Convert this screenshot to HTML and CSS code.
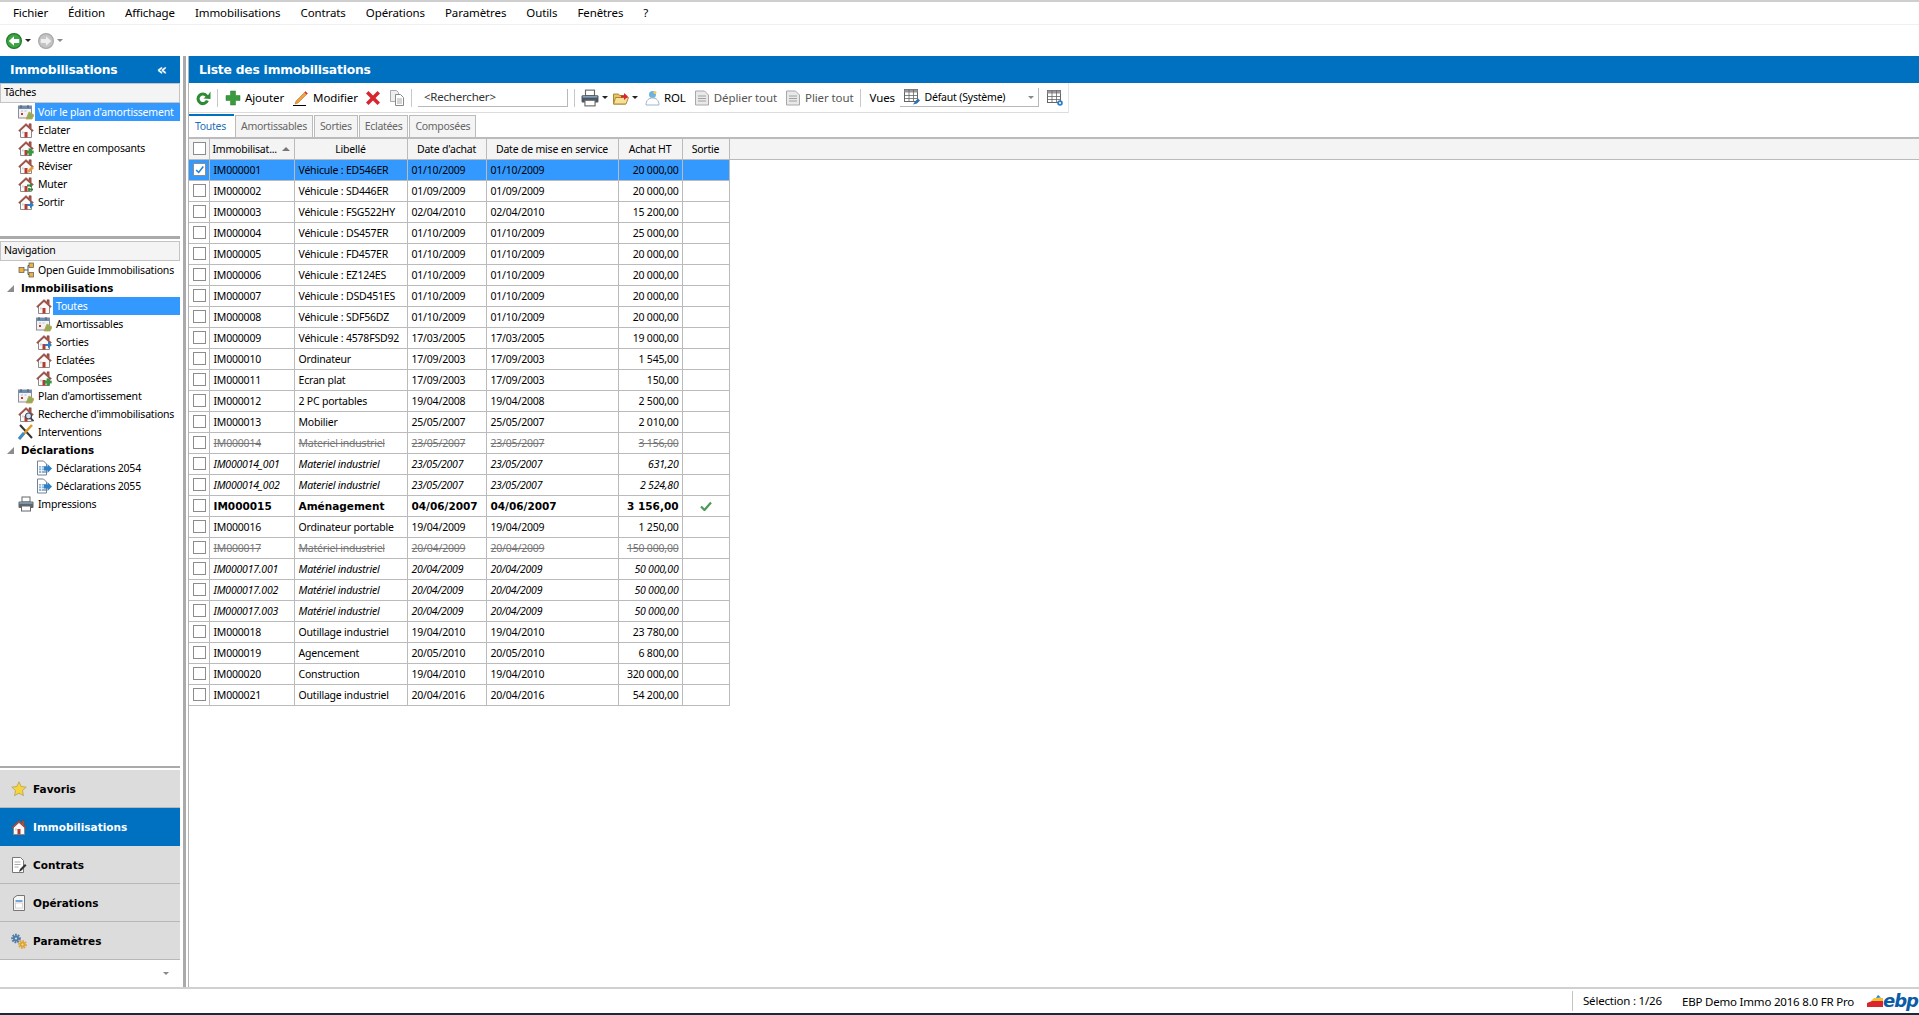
FILE: index.html
```html
<!DOCTYPE html>
<html>
<head>
  <title>EBP Immobilisations</title>
  <link rel="stylesheet" href="styles.css">
</head>
<body>

<!-- icon sheet -->
<svg class="sheet" xmlns="http://www.w3.org/2000/svg">
  <symbol id="house" viewBox="0 0 16 16">
    <path d="M2.500 8 8 3l5.500 5v7.500h-11z" fill="#fbf9f7" stroke="#8f8a86"/>
    <path d="M.6 8.600 8 1.500l3 2.800V1.800h2.200v4.600l2.200 2.200-.9.900L8 3.600 1.500 9.500z" fill="#a9564c" stroke="#7a3a32" stroke-width=".5"/>
    <rect x="6.500" y="10" width="3" height="5.500" fill="#b53a34"/>
    <rect x="4" y="9.500" width="1.800" height="2" fill="#c9d6e2"/>
  </symbol>
  <symbol id="cal" viewBox="0 0 16 16">
    <rect x=".5" y="2" width="13" height="12" fill="#f2f2f2" stroke="#8a8f99"/>
    <rect x=".5" y="2" width="13" height="3" fill="#6b8db5"/>
    <path d="M3 1v3M10 1v3" stroke="#555"/>
    <path d="M3 7h2M6.500 7h2M3 10h2" stroke="#b9bcc2"/>
    <rect x="3" y="9" width="2" height="2" fill="#c33"/>
    <path d="m8 15 3-7 5 3-2 4z" fill="#8cae5b" stroke="#c9a046" stroke-width=".8"/>
  </symbol>
  <symbol id="plus" viewBox="0 0 16 16">
    <path d="M5.500 1h5v4.500H15v5h-4.500V15h-5v-4.500H1v-5h4.500z" fill="#3a9a3f" stroke="#2a7a30" stroke-width=".5"/>
  </symbol>
  <symbol id="docarrow" viewBox="0 0 16 16">
    <path d="M1.500 1h6l3 3v11h-9z" fill="#fff" stroke="#77808c"/>
    <path d="M3 6h7v7H3z" fill="#8fb4d9"/>
    <path d="M3 8h7M3 10.500h7M5.500 6v7" stroke="#fff" stroke-width=".7"/>
    <path d="M8 6.500h3.500V4l4.500 4.500-4.500 4.500v-2.500H8z" fill="#2f7fc4"/>
  </symbol>
  <symbol id="pagelines" viewBox="0 0 16 16">
    <path d="M1.500 1h9l4 4v10h-13z" fill="#e9e9e9" stroke="#a8a8a8"/>
    <path d="M4 6h8M4 8.500h8M4 11h8" stroke="#a0a0a0"/>
  </symbol>
  <symbol id="grid" viewBox="0 0 16 16">
    <rect x=".5" y=".5" width="13" height="12" fill="#fff" stroke="#666"/>
    <path d="M.5 3.500h13v-3H.5z" fill="#999"/>
    <path d="M.5 6.500h13M.5 9.500h13M5 .5v12M9.500 .5v12" stroke="#666" stroke-width=".8"/>
  </symbol>
</svg>

<nav class="menubar">
  <span>Fichier</span><span>Édition</span><span>Affichage</span><span>Immobilisations</span><span>Contrats</span><span>Opérations</span><span>Paramètres</span><span>Outils</span><span>Fenêtres</span><span>?</span>
</nav>

<div class="navbar">
  <svg class="ic-nav" viewBox="0 0 16 16"><circle cx="8" cy="8" r="7.400" fill="#3ea544" stroke="#1f7a2a" stroke-width="1.200"/><path d="M2.800 8 8 3.200V6h5.200v4H8v2.800z" fill="#fff"/></svg>
  <i class="caret"></i>
  <svg class="ic-nav next" viewBox="0 0 16 16"><circle cx="8" cy="8" r="7.400" fill="#c4c4c4" stroke="#a8a8a8" stroke-width="1.200"/><path d="M13.200 8 8 3.200V6H2.800v4H8v2.800z" fill="#efefef"/></svg>
  <i class="caret gray"></i>
</div>

<div class="workspace">
  <aside class="sidebar">
    <div class="bar-blue">
      <span>Immobilisations</span>
      <span class="collapse">«</span>
    </div>

    <div class="group-title">Tâches</div>
    <ul class="tree tasks">
      <li class="selected"><svg class="ic"><use href="#cal"/></svg><span>Voir le plan d'amortissement</span></li>
      <li><svg class="ic"><use href="#house"/></svg><span>Eclater</span></li>
      <li><svg class="ic"><use href="#house"/><use href="#plus" x="8" y="8" width="8" height="8"/></svg><span>Mettre en composants</span></li>
      <li><svg class="ic" viewBox="0 0 16 16"><use href="#house"/><path d="m9 15 1-3 4-4 2 2-4 4z" fill="#e8963c"/></svg><span>Réviser</span></li>
      <li><svg class="ic" viewBox="0 0 16 16"><use href="#house"/><path d="M9 9.500h4M13 8v3M15 13.500h-4M11 12v3" stroke="#2e8b3c" stroke-width="1.800"/></svg><span>Muter</span></li>
      <li><svg class="ic" viewBox="0 0 16 16"><use href="#house"/><path d="M9 10h3V7.500l4 3.500-4 3.500V12H9z" fill="#2f7fc4"/></svg><span>Sortir</span></li>
    </ul>

    <div class="pane-rule"></div>

    <div class="group-title">Navigation</div>
    <ul class="tree">
      <li><svg class="ic" viewBox="0 0 16 16"><path d="M6 8h4M10 3.500v9M10 3.500h2M10 12.500h2" stroke="#555" fill="none"/><rect x="1" y="5.500" width="5" height="5" fill="#f0b23c" stroke="#555" stroke-width=".7"/><rect x="11" y="1" width="4.500" height="4.500" fill="#f0b23c" stroke="#555" stroke-width=".7"/><rect x="11" y="10.500" width="4.500" height="4.500" fill="#f0b23c" stroke="#555" stroke-width=".7"/></svg><span>Open Guide Immobilisations</span></li>
      <li class="branch"><i class="tri"></i><b>Immobilisations</b></li>
      <li class="sub selected"><svg class="ic"><use href="#house"/></svg><span>Toutes</span></li>
      <li class="sub"><svg class="ic"><use href="#cal"/></svg><span>Amortissables</span></li>
      <li class="sub"><svg class="ic" viewBox="0 0 16 16"><use href="#house"/><path d="M9 10h3V7.500l4 3.500-4 3.500V12H9z" fill="#2f7fc4"/></svg><span>Sorties</span></li>
      <li class="sub"><svg class="ic"><use href="#house"/></svg><span>Eclatées</span></li>
      <li class="sub"><svg class="ic"><use href="#house"/><use href="#plus" x="8" y="8" width="8" height="8"/></svg><span>Composées</span></li>
      <li><svg class="ic"><use href="#cal"/></svg><span>Plan d'amortissement</span></li>
      <li><svg class="ic" viewBox="0 0 16 16"><use href="#house"/><circle cx="10.500" cy="10" r="3" fill="#cfe2f3" stroke="#445" stroke-width="1.200"/><path d="m12.800 12.300 2.700 2.700" stroke="#445" stroke-width="1.800"/></svg><span>Recherche d'immobilisations</span></li>
      <li><svg class="ic" viewBox="0 0 16 16"><path d="m2 1 12 13" stroke="#333" stroke-width="2"/><path d="M14 1 2 14" stroke="#d99a2b" stroke-width="2.500"/><path d="m1 15 5-6" stroke="#3d8ac7" stroke-width="3"/></svg><span>Interventions</span></li>
      <li class="branch"><i class="tri"></i><b>Déclarations</b></li>
      <li class="sub"><svg class="ic"><use href="#docarrow"/></svg><span>Déclarations 2054</span></li>
      <li class="sub"><svg class="ic"><use href="#docarrow"/></svg><span>Déclarations 2055</span></li>
      <li><svg class="ic" viewBox="0 0 16 16"><rect x="4" y="1" width="8" height="5" fill="#fff" stroke="#666"/><rect x=".5" y="5.500" width="15" height="6.500" rx="1" fill="#5d6670"/><rect x="3.500" y="10" width="9" height="5" fill="#fff" stroke="#666"/><path d="M1.500 7h13" stroke="#9fc3e0"/></svg><span>Impressions</span></li>
    </ul>

    <div class="spacer"></div>

    <div class="pane-rule low"></div>
    <div class="sections">
      <div class="section"><svg class="ic-sec" viewBox="0 0 16 16"><path d="m8 .8 2.200 4.700 5 .6-3.700 3.500 1 5.100L8 12.200l-4.500 2.500 1-5.100L.8 6.100l5-.6z" fill="#f7d43c" stroke="#a89a5a" stroke-width=".7"/></svg>Favoris</div>
      <div class="section active"><svg class="ic-sec"><use href="#house"/></svg>Immobilisations</div>
      <div class="section"><svg class="ic-sec" viewBox="0 0 16 16"><path d="M1.500 .5h8l3 3v12h-11z" fill="#fff" stroke="#777"/><path d="M3.500 5h6M3.500 7.500h6M3.500 10h4" stroke="#aaa"/><path d="m8 15 1-3 5-5 1.500 1.500-5 5z" fill="#333"/></svg>Contrats</div>
      <div class="section"><svg class="ic-sec" viewBox="0 0 16 16"><path d="M2.500 3 6 .5h7.500v15h-11z" fill="#f6f6f6" stroke="#777"/><rect x="4.500" y="5" width="7" height="2" fill="#6fa8d6"/><rect x="4.500" y="8" width="7" height="5" fill="#fff" stroke="#bbb" stroke-width=".6"/></svg>Opérations</div>
      <div class="section"><svg class="ic-sec" viewBox="0 0 16 16"><circle cx="5" cy="5.500" r="3.600" fill="none" stroke="#4f7ba8" stroke-width="2.400" stroke-dasharray="1.700 .9"/><circle cx="5" cy="5.500" r="3" fill="#4f7ba8"/><circle cx="5" cy="5.500" r="1.100" fill="#dcdcdc"/><circle cx="11.500" cy="11.500" r="3.300" fill="none" stroke="#e0a32e" stroke-width="2.200" stroke-dasharray="1.600 .9"/><circle cx="11.500" cy="11.500" r="2.700" fill="#e0a32e"/><circle cx="11.500" cy="11.500" r="1" fill="#dcdcdc"/></svg>Paramètres</div>
    </div>
    <div class="more"><i class="caret gray"></i></div>
  </aside>

  <div class="splitter"></div>

  <main class="content">
    <div class="bar-blue"><span>Liste des immobilisations</span></div>

    <div class="toolbar">
      <svg class="ic refresh" viewBox="0 0 16 16"><path d="M13 5.200A6.300 6.300 0 1 0 13.800 11l-2.900-.9A3.300 3.300 0 1 1 10.600 6.800L8.500 8.500 15.500 9V1.500z" fill="#2d8a37"/></svg>
      <i class="sep first"></i>
      <svg class="ic add" viewBox="0 0 16 16"><use href="#plus" width="16" height="16"/></svg>
      <span class="tool-label">Ajouter</span>
      <svg class="ic edit" viewBox="0 0 16 16"><path d="M3 11 12.500 1.500l2 2L5 13l-3 1z" fill="#f0a040" stroke="#a96a20" stroke-width=".5"/><path d="m12.500 1.500 2 2-1 1-2-2z" fill="#d33"/><path d="M0 15.500h13" stroke="#000"/></svg>
      <span class="tool-label">Modifier</span>
      <svg class="ic delete" viewBox="0 0 16 16"><path d="M1 3.500 3.500 1 8 5.500 12.500 1 15 3.500 10.500 8l4.500 4.500-2.500 2.500L8 10.500 3.500 15 1 12.500 5.500 8z" fill="#d8262c"/></svg>
      <svg class="ic copy" viewBox="0 0 16 16"><path d="M1.500 .5h6l2 2v9h-8z" fill="#eee" stroke="#aaa"/><path d="M6.500 4.500h5l3 3v8h-8z" fill="#fff" stroke="#888"/><path d="M8 9h5M8 11h5M8 13h5" stroke="#aaa"/></svg>
      <i class="sep"></i>
      <div class="search">&lt;Rechercher&gt;</div>
      <i class="sep"></i>
      <svg class="ic print" viewBox="0 0 16 16"><rect x="4" y="1" width="8" height="5" fill="#fff" stroke="#666"/><rect x=".5" y="5.500" width="15" height="6.500" rx="1" fill="#4d5660"/><rect x="3.500" y="10" width="9" height="5" fill="#fff" stroke="#666"/><path d="M1.500 7h13" stroke="#9fc3e0"/></svg>
      <i class="caret"></i>
      <svg class="ic folder" viewBox="0 0 16 16"><path d="M.5 14V4h5l1 1.500h6V14z" fill="#e9c45f" stroke="#a98a32"/><path d="m.5 14 2-6.500h13L13 14z" fill="#f6df96" stroke="#a98a32"/><path d="M8 5.500h3V3l4 3.500-4 3.500V7.500H8z" fill="#d8262c"/></svg>
      <i class="caret"></i>
      <svg class="ic rol" viewBox="0 0 16 16"><circle cx="8.500" cy="4.500" r="3.500" fill="#6fb2e0"/><path d="M2 15c0-5 3-7 6.500-7S15 10 15 15z" fill="#fff" stroke="#9db7cc"/><circle cx="11" cy="2.500" r="1.500" fill="#f2d24a"/></svg>
      <span class="tool-label">ROL</span>
      <svg class="ic pl" viewBox="0 0 16 16"><use href="#pagelines" width="16" height="16"/></svg>
      <span class="tool-label off">Déplier tout</span>
      <svg class="ic pl" viewBox="0 0 16 16"><use href="#pagelines" width="16" height="16"/></svg>
      <span class="tool-label off">Plier tout</span>
      <i class="sep"></i>
      <span class="tool-label views">Vues</span>
      <div class="combo">
        <svg class="ic" viewBox="0 0 16 16"><use href="#grid" width="16" height="16"/><path d="m9 15.500 2-3 3-3 2 2-3 3z" fill="#2f6fb0"/></svg>
        <span class="combo-text">Défaut (Système)</span>
        <i class="caret gray"></i>
      </div>
      <svg class="ic cfg" viewBox="0 0 16 16"><use href="#grid" width="16" height="16"/><circle cx="13" cy="13" r="2.800" fill="#2f7fc4"/><circle cx="13" cy="13" r="1" fill="#fff"/></svg>
    </div>

    <div class="tabs">
      <span class="tab current">Toutes</span>
      <span class="tab">Amortissables</span>
      <span class="tab">Sorties</span>
      <span class="tab">Eclatées</span>
      <span class="tab">Composées</span>
    </div>

    <table class="grid">
      <colgroup>
        <col class="c-check"><col class="c-id"><col class="c-label"><col class="c-buy"><col class="c-start"><col class="c-amount"><col class="c-out"><col>
      </colgroup>
      <thead>
        <tr>
          <th><i class="box"></i></th>
          <th class="sorted"><span>Immobilisat...</span><i class="up"></i></th>
          <th>Libellé</th>
          <th>Date d'achat</th>
          <th>Date de mise en service</th>
          <th>Achat HT</th>
          <th>Sortie</th>
          <th></th>
        </tr>
      </thead>
      <tbody>
        <tr class="sel"><td><i class="box on"><svg viewBox="0 0 13 13"><path d="m2.500 7 3 3 5.500-7" fill="none" stroke="#1f7fd6" stroke-width="1.800"/></svg></i></td><td>IM000001</td><td>Véhicule : ED546ER</td><td>01/10/2009</td><td>01/10/2009</td><td class="num">20 000,00</td><td></td><td class="fill"></td></tr>
        <tr><td><i class="box"></i></td><td>IM000002</td><td>Véhicule : SD446ER</td><td>01/09/2009</td><td>01/09/2009</td><td class="num">20 000,00</td><td></td><td class="fill"></td></tr>
        <tr><td><i class="box"></i></td><td>IM000003</td><td>Véhicule : FSG522HY</td><td>02/04/2010</td><td>02/04/2010</td><td class="num">15 200,00</td><td></td><td class="fill"></td></tr>
        <tr><td><i class="box"></i></td><td>IM000004</td><td>Véhicule : DS457ER</td><td>01/10/2009</td><td>01/10/2009</td><td class="num">25 000,00</td><td></td><td class="fill"></td></tr>
        <tr><td><i class="box"></i></td><td>IM000005</td><td>Véhicule : FD457ER</td><td>01/10/2009</td><td>01/10/2009</td><td class="num">20 000,00</td><td></td><td class="fill"></td></tr>
        <tr><td><i class="box"></i></td><td>IM000006</td><td>Véhicule : EZ124ES</td><td>01/10/2009</td><td>01/10/2009</td><td class="num">20 000,00</td><td></td><td class="fill"></td></tr>
        <tr><td><i class="box"></i></td><td>IM000007</td><td>Véhicule : DSD451ES</td><td>01/10/2009</td><td>01/10/2009</td><td class="num">20 000,00</td><td></td><td class="fill"></td></tr>
        <tr><td><i class="box"></i></td><td>IM000008</td><td>Véhicule : SDF56DZ</td><td>01/10/2009</td><td>01/10/2009</td><td class="num">20 000,00</td><td></td><td class="fill"></td></tr>
        <tr><td><i class="box"></i></td><td>IM000009</td><td>Véhicule : 4578FSD92</td><td>17/03/2005</td><td>17/03/2005</td><td class="num">19 000,00</td><td></td><td class="fill"></td></tr>
        <tr><td><i class="box"></i></td><td>IM000010</td><td>Ordinateur</td><td>17/09/2003</td><td>17/09/2003</td><td class="num">1 545,00</td><td></td><td class="fill"></td></tr>
        <tr><td><i class="box"></i></td><td>IM000011</td><td>Ecran plat</td><td>17/09/2003</td><td>17/09/2003</td><td class="num">150,00</td><td></td><td class="fill"></td></tr>
        <tr><td><i class="box"></i></td><td>IM000012</td><td>2 PC portables</td><td>19/04/2008</td><td>19/04/2008</td><td class="num">2 500,00</td><td></td><td class="fill"></td></tr>
        <tr><td><i class="box"></i></td><td>IM000013</td><td>Mobilier</td><td>25/05/2007</td><td>25/05/2007</td><td class="num">2 010,00</td><td></td><td class="fill"></td></tr>
        <tr class="split"><td><i class="box"></i></td><td>IM000014</td><td>Materiel industriel</td><td>23/05/2007</td><td>23/05/2007</td><td class="num">3 156,00</td><td></td><td class="fill"></td></tr>
        <tr class="part"><td><i class="box"></i></td><td>IM000014_001</td><td>Materiel industriel</td><td>23/05/2007</td><td>23/05/2007</td><td class="num">631,20</td><td></td><td class="fill"></td></tr>
        <tr class="part"><td><i class="box"></i></td><td>IM000014_002</td><td>Materiel industriel</td><td>23/05/2007</td><td>23/05/2007</td><td class="num">2 524,80</td><td></td><td class="fill"></td></tr>
        <tr class="out"><td><i class="box"></i></td><td>IM000015</td><td>Aménagement</td><td>04/06/2007</td><td>04/06/2007</td><td class="num">3 156,00</td><td class="mid"><svg class="tick" viewBox="0 0 12 10"><path d="M1 5.500 4.500 9 11 1.500" fill="none" stroke="#4b9a58" stroke-width="2.200"/></svg></td><td class="fill"></td></tr>
        <tr><td><i class="box"></i></td><td>IM000016</td><td>Ordinateur portable</td><td>19/04/2009</td><td>19/04/2009</td><td class="num">1 250,00</td><td></td><td class="fill"></td></tr>
        <tr class="split"><td><i class="box"></i></td><td>IM000017</td><td>Matériel industriel</td><td>20/04/2009</td><td>20/04/2009</td><td class="num">150 000,00</td><td></td><td class="fill"></td></tr>
        <tr class="part"><td><i class="box"></i></td><td>IM000017.001</td><td>Matériel industriel</td><td>20/04/2009</td><td>20/04/2009</td><td class="num">50 000,00</td><td></td><td class="fill"></td></tr>
        <tr class="part"><td><i class="box"></i></td><td>IM000017.002</td><td>Matériel industriel</td><td>20/04/2009</td><td>20/04/2009</td><td class="num">50 000,00</td><td></td><td class="fill"></td></tr>
        <tr class="part"><td><i class="box"></i></td><td>IM000017.003</td><td>Matériel industriel</td><td>20/04/2009</td><td>20/04/2009</td><td class="num">50 000,00</td><td></td><td class="fill"></td></tr>
        <tr><td><i class="box"></i></td><td>IM000018</td><td>Outillage industriel</td><td>19/04/2010</td><td>19/04/2010</td><td class="num">23 780,00</td><td></td><td class="fill"></td></tr>
        <tr><td><i class="box"></i></td><td>IM000019</td><td>Agencement</td><td>20/05/2010</td><td>20/05/2010</td><td class="num">6 800,00</td><td></td><td class="fill"></td></tr>
        <tr><td><i class="box"></i></td><td>IM000020</td><td>Construction</td><td>19/04/2010</td><td>19/04/2010</td><td class="num">320 000,00</td><td></td><td class="fill"></td></tr>
        <tr><td><i class="box"></i></td><td>IM000021</td><td>Outillage industriel</td><td>20/04/2016</td><td>20/04/2016</td><td class="num">54 200,00</td><td></td><td class="fill"></td></tr>
      </tbody>
    </table>
  </main>
</div>

<footer class="statusbar">
  <span class="st-sel">Sélection : 1/26</span>
  <span class="st-app">EBP Demo Immo 2016 8.0 FR Pro</span>
  <div class="logo">
    <svg viewBox="0 0 16 14"><path d="M0 9 5 7h11v6H0z" fill="#d8262c"/><path d="M4 7 7 4h9v3z" fill="#f2c230"/><path d="m9 4 2-3 3 2.500z" fill="#2f7fc4"/></svg>
    <span>ebp</span>
  </div>
</footer>

</body>
</html>
```

FILE: styles.css
```css
* {
  box-sizing: border-box;
}

html, body {
  height: 100%;
}

body {
  margin: 0;
  height: 1015px;
  overflow: hidden;
  display: flex;
  flex-direction: column;
  font-family: "Noto Sans", "Liberation Sans", sans-serif;
  font-size: 10.500px;
  letter-spacing: -0.2px;
  color: #000;
  background-color: #fff;
  border-top: 2px solid #cfcfcf;
}

i {
  font-style: normal;
}

.sheet {
  position: absolute;
  width: 0;
  height: 0;
}

/* Top bars */
.menubar {
  height: 23px;
  flex: none;
  display: flex;
  align-items: center;
  gap: 20px;
  padding: 0 0 2px 13px;
  font-size: 11.500px;
  letter-spacing: -0.1px;
  border-bottom: 1px solid #f0f0f0;
}

.navbar {
  height: 31px;
  flex: none;
  display: flex;
  align-items: center;
  padding-left: 6px;
}

.ic-nav {
  width: 16px;
  height: 16px;
}

.ic-nav.next {
  margin-left: 7px;
}

.caret {
  width: 0;
  height: 0;
  margin-left: 3px;
  border-left: 3px solid transparent;
  border-right: 3px solid transparent;
  border-top: 3px solid #222;
}

.caret.gray {
  border-top-color: #888;
}

.workspace {
  flex: 1;
  min-height: 0;
  display: flex;
}

/* Left pane */
.sidebar {
  width: 180px;
  flex: none;
  display: flex;
  flex-direction: column;
}

.bar-blue {
  height: 27px;
  flex: none;
  display: flex;
  align-items: center;
  justify-content: space-between;
  padding: 0 10px;
  background-color: #0070c0;
  color: #fff;
  font-family: "DejaVu Sans", sans-serif;
  font-size: 12.300px;
  letter-spacing: -0.2px;
  font-weight: bold;
}

.collapse {
  font-size: 16px;
  line-height: 16px;
  margin-right: 3px;
}

.group-title {
  height: 20px;
  flex: none;
  padding: 0 3px;
  line-height: 17px;
  background-color: #f4f4f4;
  border: 1px solid #c4c4c4;
}

.tree {
  list-style: none;
  margin: 0;
  padding: 0;
  flex: none;
}

.tree li {
  height: 18px;
  display: flex;
  align-items: center;
  padding-left: 18px;
}

.tree li.sub {
  padding-left: 36px;
}

.tree li.branch {
  padding-left: 7px;
}

.tree li span {
  margin-left: 1px;
  padding: 0 3px;
  flex: 1;
  line-height: 18px;
  white-space: nowrap;
}

.tree li.selected span {
  background-color: #3399ff;
  color: #fff;
}

.tree li b {
  margin-left: 7px;
  font-family: "DejaVu Sans", sans-serif;
  font-size: 10.300px;
  letter-spacing: 0;
}

.tri {
  width: 0;
  height: 0;
  border-left: 7px solid transparent;
  border-bottom: 7px solid #8c8c8c;
}

.ic {
  width: 16px;
  height: 16px;
  flex: none;
}

.tasks {
  height: 133px;
}

.pane-rule {
  height: 3px;
  flex: none;
  background-color: #aaa;
  margin-bottom: 2px;
}

.pane-rule.low {
  height: 2px;
}

.spacer {
  flex: 1;
}

.sections {
  flex: none;
  display: flex;
  flex-direction: column;
}

.section {
  height: 38px;
  display: flex;
  align-items: center;
  gap: 6px;
  padding-left: 11px;
  background-color: #dcdcdc;
  border-bottom: 1px solid #b8b8b8;
  font-family: "DejaVu Sans", sans-serif;
  font-size: 10.500px;
  letter-spacing: 0;
  font-weight: bold;
}

.section.active {
  background-color: #0070c0;
  border-bottom-color: #0070c0;
  color: #fff;
}

.ic-sec {
  width: 16px;
  height: 16px;
  flex: none;
}

.more {
  height: 27px;
  flex: none;
  display: flex;
  align-items: center;
  justify-content: flex-end;
  padding-right: 11px;
}

.splitter {
  width: 8px;
  flex: none;
  border-left: 3px solid #aaa;
  margin-left: 3px;
  margin-right: -3px;
}

/* Right pane */
.content {
  flex: 1;
  min-width: 0;
  display: flex;
  flex-direction: column;
  border-left: 1px solid #b4b4b4;
}

.toolbar {
  width: 880px;
  height: 30px;
  flex: none;
  display: flex;
  align-items: center;
  padding-left: 6px;
  border-bottom: 1px solid #dcdcdc;
  border-right: 1px solid #e6e6e6;
}

.sep {
  width: 1px;
  height: 18px;
  flex: none;
  margin: 0 6px;
  background-color: #c8c8c8;
}

.sep.first {
  margin: 0 7px 0 6px;
}

.tool-label {
  margin-left: 4px;
  white-space: nowrap;
  font-size: 11.500px;
  letter-spacing: -0.1px;
}

.tool-label.off {
  color: #555;
}

.tool-label.views {
  margin-left: 3px;
  width: 30px;
}

.edit {
  margin-left: 9px;
}

.delete {
  margin-left: 7px;
}

.copy {
  margin-left: 8px;
}

.search {
  width: 150px;
  height: 18px;
  flex: none;
  padding-left: 6px;
  line-height: 16px;
  font-size: 11.500px;
  color: #333;
  border-bottom: 1px solid #b8b8b8;
  border-right: 1px solid #b8b8b8;
}

.print {
  width: 18px;
  height: 18px;
}

.folder {
  margin-left: 5px;
}

.rol {
  margin-left: 6px;
}

.pl {
  margin-left: 8px;
}

.combo {
  width: 139px;
  height: 19px;
  flex: none;
  display: flex;
  align-items: center;
  padding-left: 3px;
  border-bottom: 1px solid #b8b8b8;
  border-right: 1px solid #b8b8b8;
}

.combo .ic {
  width: 18px;
}

.combo-text {
  flex: 1;
  margin-left: 4px;
}

.combo .caret {
  margin-right: 4px;
}

.cfg {
  margin-left: 8px;
}

.tabs {
  height: 24px;
  flex: none;
  display: flex;
  align-items: flex-end;
  gap: 1px;
}

.tab {
  height: 22px;
  padding: 0 5px;
  line-height: 20px;
  letter-spacing: -0.3px;
  color: #666;
  background-color: #f4f4f4;
  border: 1px solid #bbb;
  border-bottom: none;
}

.tab.current {
  height: 23px;
  width: 45px;
  color: #1f6fb8;
  background-color: #fff;
  border: none;
  border-top: 2px solid #0070c0;
  padding: 0 0 0 6px;
}

/* Data table */
.grid {
  width: 100%;
  table-layout: fixed;
  border-collapse: collapse;
  border-top: 2px solid #bbb;
}

.c-check { width: 20px; }
.c-id { width: 85px; }
.c-label { width: 113px; }
.c-buy { width: 79px; }
.c-start { width: 132px; }
.c-amount { width: 64px; }
.c-out { width: 47px; }

.grid th {
  height: 21px;
  padding: 0 3px;
  font-weight: normal;
  text-align: center;
  white-space: nowrap;
  background-color: #f4f4f4;
  border: 1px solid #bbb;
}

.grid th:first-child,
.grid td:first-child {
  padding: 0 0 0 4px;
  text-align: left;
  border-left: none;
}

.grid th:last-child {
  border-right: none;
}

.grid th.sorted {
  text-align: left;
  padding-right: 0;
}

.up {
  display: inline-block;
  width: 0;
  height: 0;
  margin-left: 5px;
  vertical-align: 2px;
  border-left: 4px solid transparent;
  border-right: 4px solid transparent;
  border-bottom: 4px solid #777;
}

.grid td {
  height: 21px;
  padding: 0 3px 0 4px;
  white-space: nowrap;
  overflow: hidden;
  border: 1px solid #bbb;
}

.grid td.fill {
  border: none;
}

.grid td.num {
  text-align: right;
}

.grid td.mid {
  text-align: center;
}

.box {
  display: block;
  width: 13px;
  height: 13px;
  background-color: #fff;
  border: 1px solid #8c8c8c;
}

.box svg {
  display: block;
  width: 11px;
  height: 11px;
}

.tick {
  display: block;
  width: 12px;
  height: 10px;
  margin: 0 auto;
}

.sel td:not(.fill) {
  background-color: #3399ff;
}

.split td {
  color: #777;
  text-decoration: line-through;
}

.part td {
  font-style: italic;
}

.out td {
  font-family: "DejaVu Sans", sans-serif;
  font-size: 10.500px;
  letter-spacing: 0;
  font-weight: bold;
}

/* Status bar */
.statusbar {
  height: 28px;
  flex: none;
  display: flex;
  align-items: center;
  font-size: 11.500px;
  border-top: 2px solid #d0d0d0;
  border-bottom: 2px solid #1b2a3a;
  padding-left: 1572px;
}

.st-sel {
  width: 110px;
  height: 20px;
  line-height: 20px;
  padding-left: 10px;
  border-left: 1px solid #c4c4c4;
}

.st-app {
  width: 185px;
  white-space: nowrap;
}

.logo {
  display: flex;
  align-items: center;
  font-family: "DejaVu Sans", sans-serif;
  font-size: 18px;
  font-weight: bold;
  font-style: italic;
  color: #0b5ca8;
  letter-spacing: -1px;
  line-height: 18px;
}

.logo svg {
  width: 16px;
  height: 14px;
}
```
